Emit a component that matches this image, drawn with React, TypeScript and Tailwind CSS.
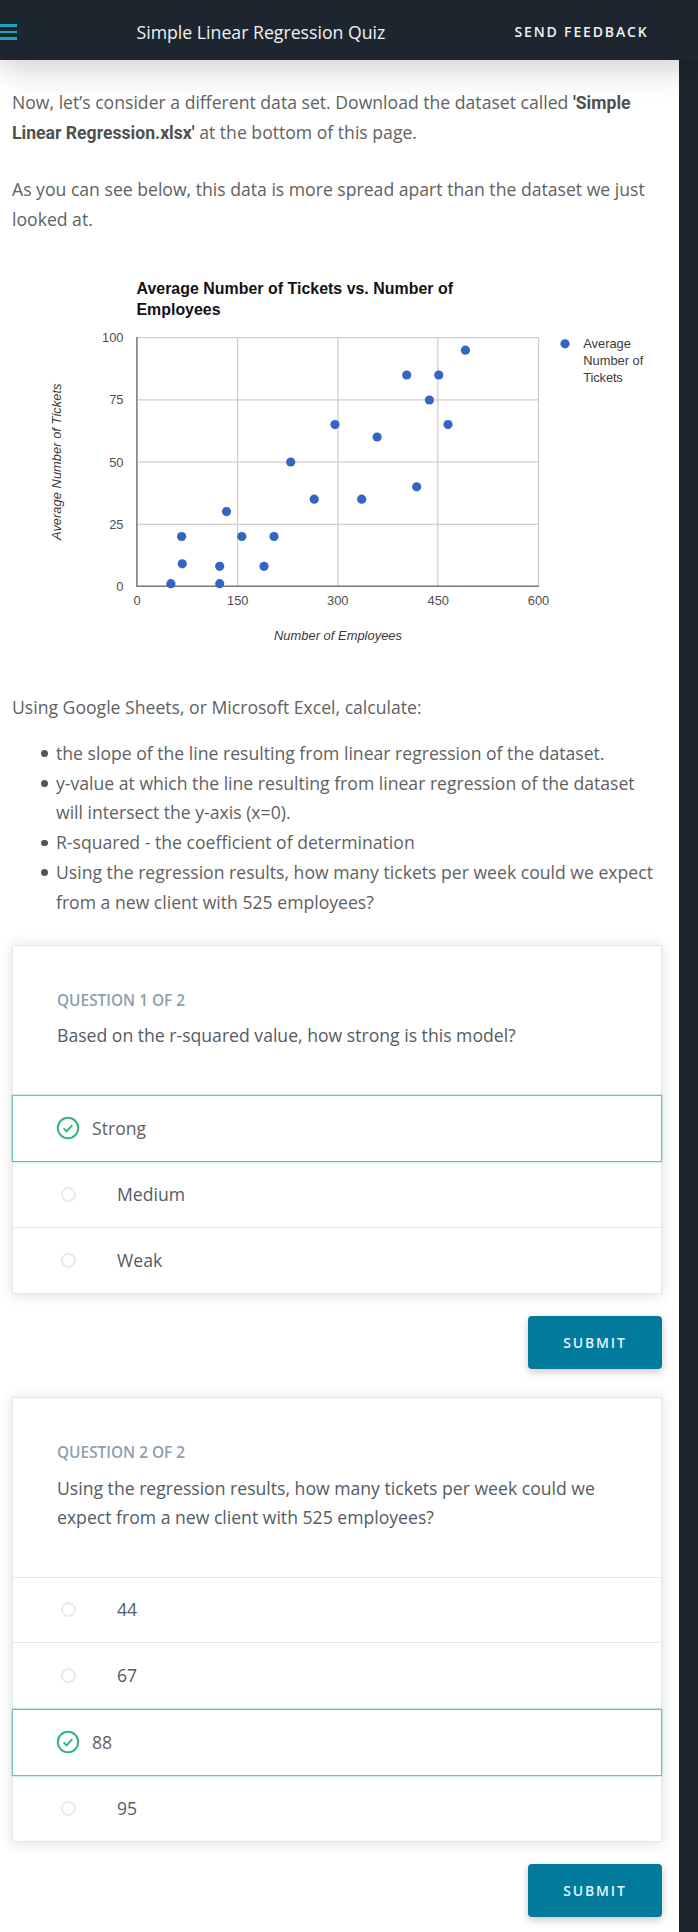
import React from "react";

const points: [number, number][] = [
  [170.9, 583.7], [181.6, 536.5], [182.3, 563.8], [219.7, 566.3], [219.7, 583.7],
  [226.5, 511.6], [241.8, 536.5], [264, 566.3], [274, 536.5], [290.7, 462],
  [314.2, 499.2], [335, 424.6], [361.7, 499.2], [377.1, 437], [406.7, 375],
  [416.7, 486.8], [429.4, 400], [438.8, 375], [448, 424.6], [465.4, 350.2],
];

function Chart() {
  return (
    <svg
      viewBox="0 250 679 420"
      className="block h-[420px] w-[679px] shrink-0 font-['Liberation_Sans',sans-serif]"
    >
      <g fill="#111" fontSize="15.9" fontWeight="700">
        <text x="136.5" y="293.7" textLength="316.5">Average Number of Tickets vs. Number of</text>
        <text x="136.5" y="314.7" textLength="84">Employees</text>
      </g>
      <g stroke="#cfcfcf" strokeWidth="1.3">
        {[337.7, 399.8, 462.2, 524.3].map((y) => (
          <line key={y} x1="137" x2="539" y1={y} y2={y} />
        ))}
        {[237.6, 338, 437.8, 538.5].map((x) => (
          <line key={x} x1={x} x2={x} y1="337.5" y2="586" />
        ))}
      </g>
      <path d="M136.9 337V586.3H539" fill="none" stroke="#777" strokeWidth="1.5" />
      <g fill="#505050" fontSize="12.9" textAnchor="end">
        <text x="123.5" y="342">100</text>
        <text x="123.5" y="404.4">75</text>
        <text x="123.5" y="466.6">50</text>
        <text x="123.5" y="528.8">25</text>
        <text x="123.5" y="590.6">0</text>
      </g>
      <g fill="#505050" fontSize="12.9" textAnchor="middle">
        <text x="137" y="605.3">0</text>
        <text x="237.8" y="605.3">150</text>
        <text x="337.8" y="605.3">300</text>
        <text x="438.3" y="605.3">450</text>
        <text x="538.5" y="605.3">600</text>
      </g>
      <g fill="#3a3a3a" fontSize="12.9" fontStyle="italic">
        <text x="274" y="640.1" textLength="128">Number of Employees</text>
        <text transform="translate(61 540) rotate(-90)" textLength="156.5">Average Number of Tickets</text>
      </g>
      <g fill="#3366c4">
        {points.map(([x, y]) => (
          <circle key={`${x}-${y}`} cx={x} cy={y} r="4.6" />
        ))}
        <circle cx="565" cy="343.8" r="4.6" />
      </g>
      <g fill="#3a3a3a" fontSize="12.9">
        <text x="583.3" y="348.4" textLength="47.5">Average</text>
        <text x="583.3" y="364.9" textLength="60">Number of</text>
        <text x="583.3" y="381.8" textLength="39.5">Tickets</text>
      </g>
    </svg>
  );
}

function Option({ label, correct, first }: { label: string; correct?: boolean; first?: boolean }) {
  if (correct) {
    return (
      <li className="-mx-px flex h-[67px] items-center border-[1.5px] border-[#6fc29d] pl-[43px] text-[#616161] shadow-[0_0_2px_#7fd6ad]">
        <svg viewBox="0 0 24 24" className="mr-[12px] mb-px h-6 w-6 shrink-0" fill="none" stroke="#36b37e">
          <circle cx="12" cy="12" r="10.2" strokeWidth="2" />
          <path d="M7.6 12.4l3 3 5.7-6.3" strokeWidth="2" />
        </svg>
        <span>{label}</span>
      </li>
    );
  }
  return (
    <li className={`flex h-[66px] items-center pl-[48px] ${first ? "border-t border-[#e4e8ec]" : ""}`}>
      <span className="mr-[41px] mb-px h-[15px] w-[15px] rounded-full border-2 border-[#e8ebed]" />
      <span>{label}</span>
    </li>
  );
}

function Submit() {
  return (
    <button className="mr-[17px] block h-[53px] w-[134px] self-end rounded-[4px] bg-[#027a9c] text-[14px] font-semibold tracking-[1.85px] text-[#e0f5fa] shadow-[0_3px_8px_rgba(0,0,0,0.22)]">
      SUBMIT
    </button>
  );
}

const cardClass =
  "ml-[12px] w-[650px] border border-[#e2e7eb] bg-white text-[#525c65] shadow-[0_1px_12px_rgba(46,61,73,0.17)]";
const eyebrowClass = "text-[15.4px] leading-[24px] font-semibold text-[#8ba0b2]";
const boldClass = "font-['Roboto',sans-serif] leading-[0] font-bold text-[#505050]";

export default function App() {
  return (
    <div className="relative flex h-[1932px] w-[698px] flex-col overflow-hidden bg-[#1d262e] font-['Open_Sans','Noto_Sans',sans-serif] text-[17.63px] leading-[29.8px] text-[#616161]">
      <header className="z-10 flex h-[60px] shrink-0 items-center bg-[#1d262e] pt-[4px] text-[#eef2f4] shadow-[0_8px_34px_rgba(0,0,0,0.2)]">
        <div className="flex w-[136.5px] flex-col gap-[4px]">
          <span className="h-[2.5px] w-[17px] bg-[#1fa3c4]" />
          <span className="h-[2.5px] w-[17px] bg-[#1fa3c4]" />
          <span className="h-[2.5px] w-[17px] bg-[#1fa3c4]" />
        </div>
        <h1 className="w-[378px] pt-px text-[17.7px] whitespace-nowrap">Simple Linear Regression Quiz</h1>
        <span className="text-[14px] font-semibold tracking-[1.85px] whitespace-nowrap">SEND FEEDBACK</span>
      </header>
      <main className="flex w-[679px] grow flex-col overflow-hidden bg-white">
        <div className="h-[190px] shrink-0 pt-[28px] pl-[12px] whitespace-nowrap">
          <p>
            Now, let’s consider a different data set. Download the dataset called{" "}
            <b className={boldClass}>'Simple</b>
            <br />
            <b className={boldClass}>Linear Regression.xlsx'</b> at the bottom of this page.
          </p>
          <p className="mt-[27.5px]">
            As you can see below, this data is more spread apart than the dataset we just
            <br />
            looked at.
          </p>
        </div>
        <Chart />
        <div className="h-[275px] shrink-0 pt-[23px] pl-[12px] whitespace-nowrap">
          <p>Using Google Sheets, or Microsoft Excel, calculate:</p>
          <ul className="mt-[16px] pl-[44px]">
            {[
              ["the slope of the line resulting from linear regression of the dataset."],
              ["y-value at which the line resulting from linear regression of the dataset", "will intersect the y-axis (x=0)."],
              ["R-squared - the coefficient of determination"],
              ["Using the regression results, how many tickets per week could we expect", "from a new client with 525 employees?"],
            ].map((lines) => (
              <li key={lines[0]} className="flex">
                <span className="mt-[11.5px] mr-[8.5px] -ml-[15px] h-[6.5px] w-[6.5px] shrink-0 rounded-full bg-[#555]" />
                <div>
                  {lines.map((line) => (
                    <div key={line}>{line}</div>
                  ))}
                </div>
              </li>
            ))}
          </ul>
        </div>
        <section className={`${cardClass} h-[349px] shrink-0`}>
          <div className="h-[149px] pt-[43px] pl-[44px]">
            <div className={eyebrowClass}>QUESTION 1 OF 2</div>
            <p className="mt-[8px]">Based on the r-squared value, how strong is this model?</p>
          </div>
          <ul className="divide-y divide-[#e4e8ec]">
            <Option label="Strong" correct />
            <Option label="Medium" />
            <Option label="Weak" />
          </ul>
        </section>
        <div className="flex h-[103px] shrink-0 flex-col pt-[22px]"><Submit /></div>
        <section className={`${cardClass} h-[445px] shrink-0`}>
          <div className="h-[179px] pt-[43px] pl-[44px] whitespace-nowrap">
            <div className={eyebrowClass}>QUESTION 2 OF 2</div>
            <p className="mt-[8.5px]">
              Using the regression results, how many tickets per week could we
              <br />
              expect from a new client with 525 employees?
            </p>
          </div>
          <ul className="divide-y divide-[#e4e8ec]">
            <Option label="44" first />
            <Option label="67" />
            <Option label="88" correct />
            <Option label="95" />
          </ul>
        </section>
        <div className="flex shrink-0 flex-col pt-[22px]"><Submit /></div>
      </main>
    </div>
  );
}
